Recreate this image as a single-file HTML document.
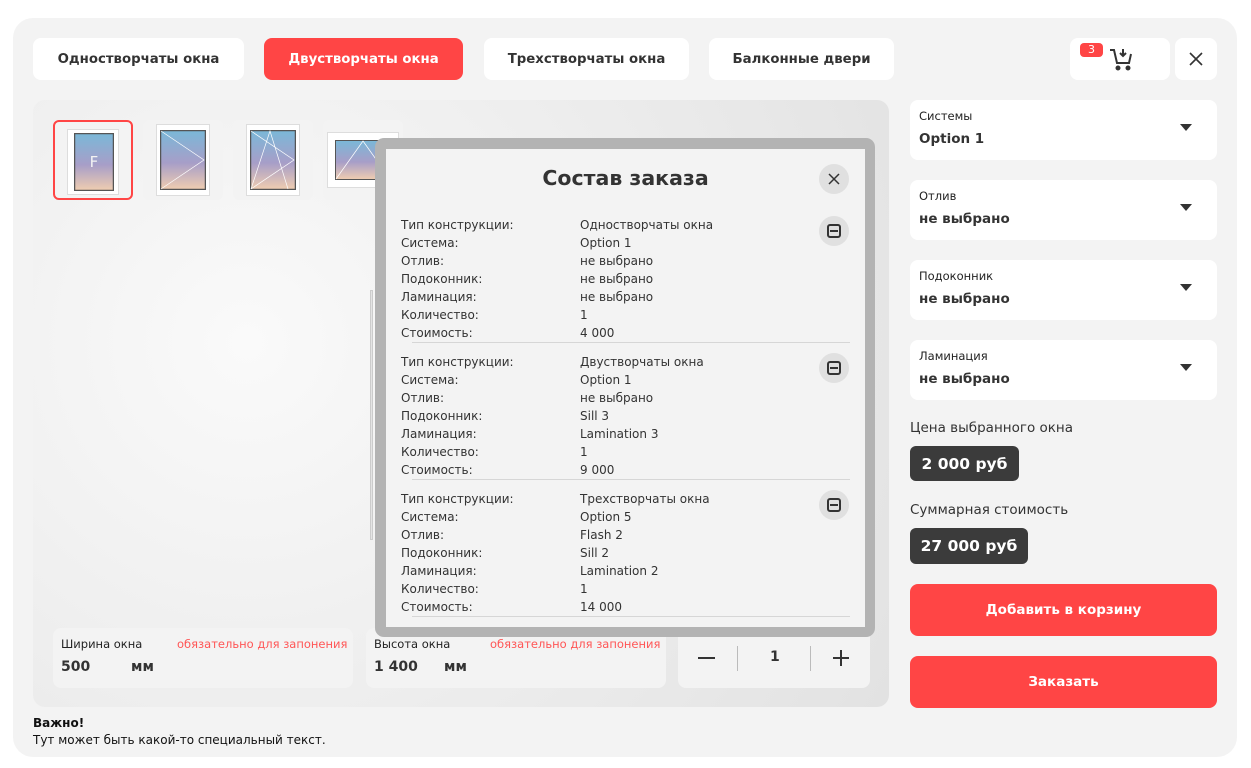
<!DOCTYPE html>
<html><head><meta charset="utf-8"><style>
*{margin:0;padding:0;box-sizing:border-box}
body{width:1251px;height:768px;background:#fff;font-family:"DejaVu Sans","Liberation Sans",sans-serif;color:#333;position:relative;overflow:hidden;white-space:nowrap}
.abs{position:absolute}
.wrap{left:13px;top:18px;width:1224px;height:739px;background:#f3f3f3;border-radius:20px}
.tab{top:38px;height:42px;background:#fff;border-radius:8px;font-weight:bold;font-size:13.3px;display:flex;align-items:center;justify-content:center;color:#333}
.tab.a{background:#ff4545;color:#fff}
.prev{left:33px;top:100px;width:856px;height:607px;border-radius:12px;background:radial-gradient(circle at 25% 40%,#fafafa 0%,#f0f0f0 40%,#e2e2e2 100%)}
.th{top:120px;width:80px;height:80px;border-radius:6px;background:#f3f3f3}
.sel{left:910px;width:307px;height:60px;background:#fff;border-radius:8px}
.sel .l{position:absolute;left:9px;top:9px;font-size:11.5px;color:#222}
.sel .v{position:absolute;left:9px;top:31px;font-size:13.5px;font-weight:bold;color:#333}
.sel .ar{position:absolute;right:25px;top:24px;width:0;height:0;border-left:6px solid transparent;border-right:6px solid transparent;border-top:7px solid #333}
.badge{background:#3b3b3b;color:#fff;font-weight:bold;font-size:15.5px;border-radius:6px;display:flex;align-items:center;justify-content:center}
.btn{left:910px;width:307px;height:52px;background:#ff4545;color:#fff;font-weight:bold;font-size:13.5px;border-radius:8px;display:flex;align-items:center;justify-content:center}
.inp{top:628px;height:60px;background:#f3f3f3;border-radius:8px}
.modal{left:375px;top:138px;width:500px;height:499px;background:#b3b3b3;border-radius:9px}
.mi{left:11px;top:11px;width:479px;height:478px;background:#f3f3f3}
.row{font-size:12px;line-height:18px;color:#333}
.row span{position:absolute}
.sep{left:26px;width:438px;height:1px;background:#d6d6d6}
.mb{width:30px;height:30px;border-radius:50%;background:#e0e0e0;left:433px}
.mb:after{content:"";position:absolute;left:8px;top:8px;width:14px;height:14px;border:2px solid #333;border-radius:3px;box-sizing:border-box}
.mb:before{content:"";position:absolute;left:11px;top:14px;width:8px;height:2px;background:#333;z-index:1}
.sm{font-size:11.5px}
</style></head><body>
<div class="abs wrap"></div>
<div class="abs tab" style="left:33px;width:211px">Одностворчаты окна</div>
<div class="abs tab a" style="left:264px;width:199px">Двустворчаты окна</div>
<div class="abs tab" style="left:484px;width:205px">Трехстворчаты окна</div>
<div class="abs tab" style="left:709px;width:185px">Балконные двери</div>
<div class="abs" style="left:1070px;top:38px;width:100px;height:42px;background:#fff;border-radius:8px">
 <div class="abs" style="left:10px;top:5px;width:23px;height:14px;background:#ff4545;border-radius:4px;color:#fff;font-size:11px;text-align:center;line-height:14px">3</div>
 <svg class="abs" style="left:38px;top:8px" width="26" height="26" viewBox="0 0 26 26" fill="none" stroke="#333" stroke-width="2"><path d="M2 4h4l3 13h12l2-9"/><path d="M15 3v7M12 7l3 3 3-3"/><circle cx="10" cy="22" r="1.5" fill="#333"/><circle cx="20" cy="22" r="1.5" fill="#333"/></svg>
</div>
<div class="abs" style="left:1175px;top:38px;width:42px;height:42px;background:#fff;border-radius:8px">
 <svg class="abs" style="left:14px;top:14px" width="14" height="14"><path d="M1 1L13 13M13 1L1 13" stroke="#333" stroke-width="1.6"/></svg>
</div>
<div class="abs prev"></div>
<div class="abs" style="left:370px;top:290px;width:3px;height:250px;background:#e4e4e4;border:1px solid #ccc"></div>
<svg width="0" height="0" class="abs"><defs><linearGradient id="g" x1="0" y1="0" x2="0" y2="1"><stop offset="0" stop-color="#7ab8d8"/><stop offset=".55" stop-color="#a79ec8"/><stop offset="1" stop-color="#f0cdb0"/></linearGradient></defs></svg>
<div class="abs th" style="left:53px;border:2px solid #ff4545">
 <div class="abs" style="left:12px;top:7px;width:52px;height:66px;background:#fff;border:1px solid #ddd"></div>
 <svg class="abs" style="left:19px;top:11px" width="40" height="58"><rect x="0.5" y="0.5" width="39" height="57" fill="url(#g)" stroke="#555" stroke-width="1.5"/><text x="20" y="34" fill="#f3f3f3" font-size="15" text-anchor="middle" font-family="DejaVu Sans">F</text></svg>
</div>
<div class="abs th" style="left:143px">
 <div class="abs" style="left:13px;top:4px;width:54px;height:72px;background:#fff;border:1px solid #ddd"></div>
 <svg class="abs" style="left:17px;top:10px" width="46" height="60"><rect x="0.5" y="0.5" width="45" height="59" fill="url(#g)" stroke="#555" stroke-width="1.5"/><path d="M1 1L44 30L1 59" stroke="#fff" fill="none" stroke-width=".7"/></svg>
</div>
<div class="abs th" style="left:233px">
 <div class="abs" style="left:13px;top:4px;width:54px;height:72px;background:#fff;border:1px solid #ddd"></div>
 <svg class="abs" style="left:17px;top:10px" width="46" height="60"><rect x="0.5" y="0.5" width="45" height="59" fill="url(#g)" stroke="#555" stroke-width="1.5"/><path d="M1 1L44 30L1 59M1 59L20 1L38 59" stroke="#fff" fill="none" stroke-width=".7"/></svg>
</div>
<div class="abs th" style="left:323px">
 <div class="abs" style="left:4px;top:12px;width:72px;height:56px;background:#fff;border:1px solid #ddd"></div>
 <svg class="abs" style="left:12px;top:20px" width="56" height="40"><rect x="0.5" y="0.5" width="55" height="39" fill="url(#g)" stroke="#555"/><path d="M1 39L28 1L55 39" stroke="#fff" fill="none" stroke-width=".7"/></svg>
</div>
<div class="abs inp" style="left:53px;width:300px"><span class="abs sm" style="left:8px;top:9px;color:#222">Ширина окна</span><span class="abs sm" style="left:124px;top:9px;color:#ff5555">обязательно для запонения</span><span class="abs" style="left:8px;top:31px;font-size:14px;font-weight:bold">500</span><span class="abs" style="left:78px;top:31px;font-size:14px;font-weight:bold">мм</span></div>
<div class="abs inp" style="left:366px;width:300px"><span class="abs sm" style="left:8px;top:9px;color:#222">Высота окна</span><span class="abs sm" style="left:124px;top:9px;color:#ff5555">обязательно для запонения</span><span class="abs" style="left:8px;top:31px;font-size:14px;font-weight:bold">1 400</span><span class="abs" style="left:78px;top:31px;font-size:14px;font-weight:bold">мм</span></div>
<div class="abs inp" style="left:678px;width:192px">
 <div class="abs" style="left:20px;top:29px;width:17px;height:2px;background:#333"></div>
 <div class="abs" style="left:59px;top:18px;width:1px;height:25px;background:#bbb"></div>
 <div class="abs" style="left:92px;top:21px;font-size:14px;font-weight:bold">1</div>
 <div class="abs" style="left:132px;top:18px;width:1px;height:25px;background:#bbb"></div>
 <div class="abs" style="left:155px;top:29px;width:16px;height:2px;background:#333"></div>
 <div class="abs" style="left:162px;top:22px;width:2px;height:16px;background:#333"></div>
</div>
<div class="abs modal"><div class="abs mi">
 <div class="abs" style="left:0;width:479px;top:17px;text-align:center;font-size:20.5px;font-weight:bold;color:#333">Состав заказа</div>
 <div class="abs" style="left:433px;top:15px;width:30px;height:30px;border-radius:50%;background:#e0e0e0"><svg class="abs" style="left:9px;top:9px" width="12" height="12"><path d="M1 1L11 11M11 1L1 11" stroke="#333" stroke-width="1.5"/></svg></div>
 <div class="abs row" style="left:15px;top:67px;width:300px;height:130px">
  <span style="left:0;top:0">Тип конструкции:</span><span style="left:179px;top:0">Одностворчаты окна</span>
  <span style="left:0;top:18px">Система:</span><span style="left:179px;top:18px">Option 1</span>
  <span style="left:0;top:36px">Отлив:</span><span style="left:179px;top:36px">не выбрано</span>
  <span style="left:0;top:54px">Подоконник:</span><span style="left:179px;top:54px">не выбрано</span>
  <span style="left:0;top:72px">Ламинация:</span><span style="left:179px;top:72px">не выбрано</span>
  <span style="left:0;top:90px">Количество:</span><span style="left:179px;top:90px">1</span>
  <span style="left:0;top:108px">Стоимость:</span><span style="left:179px;top:108px">4 000</span>
 </div>
 <div class="abs mb" style="top:67px"></div>
 <div class="abs sep" style="top:193px"></div>
 <div class="abs row" style="left:15px;top:204px;width:300px;height:130px">
  <span style="left:0;top:0">Тип конструкции:</span><span style="left:179px;top:0">Двустворчаты окна</span>
  <span style="left:0;top:18px">Система:</span><span style="left:179px;top:18px">Option 1</span>
  <span style="left:0;top:36px">Отлив:</span><span style="left:179px;top:36px">не выбрано</span>
  <span style="left:0;top:54px">Подоконник:</span><span style="left:179px;top:54px">Sill 3</span>
  <span style="left:0;top:72px">Ламинация:</span><span style="left:179px;top:72px">Lamination 3</span>
  <span style="left:0;top:90px">Количество:</span><span style="left:179px;top:90px">1</span>
  <span style="left:0;top:108px">Стоимость:</span><span style="left:179px;top:108px">9 000</span>
 </div>
 <div class="abs mb" style="top:204px"></div>
 <div class="abs sep" style="top:330px"></div>
 <div class="abs row" style="left:15px;top:341px;width:300px;height:130px">
  <span style="left:0;top:0">Тип конструкции:</span><span style="left:179px;top:0">Трехстворчаты окна</span>
  <span style="left:0;top:18px">Система:</span><span style="left:179px;top:18px">Option 5</span>
  <span style="left:0;top:36px">Отлив:</span><span style="left:179px;top:36px">Flash 2</span>
  <span style="left:0;top:54px">Подоконник:</span><span style="left:179px;top:54px">Sill 2</span>
  <span style="left:0;top:72px">Ламинация:</span><span style="left:179px;top:72px">Lamination 2</span>
  <span style="left:0;top:90px">Количество:</span><span style="left:179px;top:90px">1</span>
  <span style="left:0;top:108px">Стоимость:</span><span style="left:179px;top:108px">14 000</span>
 </div>
 <div class="abs mb" style="top:341px"></div>
 <div class="abs sep" style="top:467px"></div>
</div></div>
<div class="abs sel" style="top:100px"><span class="l">Системы</span><span class="v">Option 1</span><i class="ar"></i></div>
<div class="abs sel" style="top:180px"><span class="l">Отлив</span><span class="v">не выбрано</span><i class="ar"></i></div>
<div class="abs sel" style="top:260px"><span class="l">Подоконник</span><span class="v">не выбрано</span><i class="ar"></i></div>
<div class="abs sel" style="top:340px"><span class="l">Ламинация</span><span class="v">не выбрано</span><i class="ar"></i></div>
<div class="abs" style="left:910px;top:420px;font-size:13.5px;color:#333">Цена выбранного окна</div>
<div class="abs badge" style="left:910px;top:446px;width:109px;height:35px">2 000 руб</div>
<div class="abs" style="left:910px;top:502px;font-size:13.5px;color:#333">Суммарная стоимость</div>
<div class="abs badge" style="left:910px;top:528px;width:118px;height:36px">27 000 руб</div>
<div class="abs btn" style="top:584px">Добавить в корзину</div>
<div class="abs btn" style="top:656px">Заказать</div>
<div class="abs" style="left:33px;top:716px;font-size:12px;font-weight:bold;color:#111">Важно!</div>
<div class="abs" style="left:33px;top:733px;font-size:12px;color:#111">Тут может быть какой-то специальный текст.</div>
</body></html>
